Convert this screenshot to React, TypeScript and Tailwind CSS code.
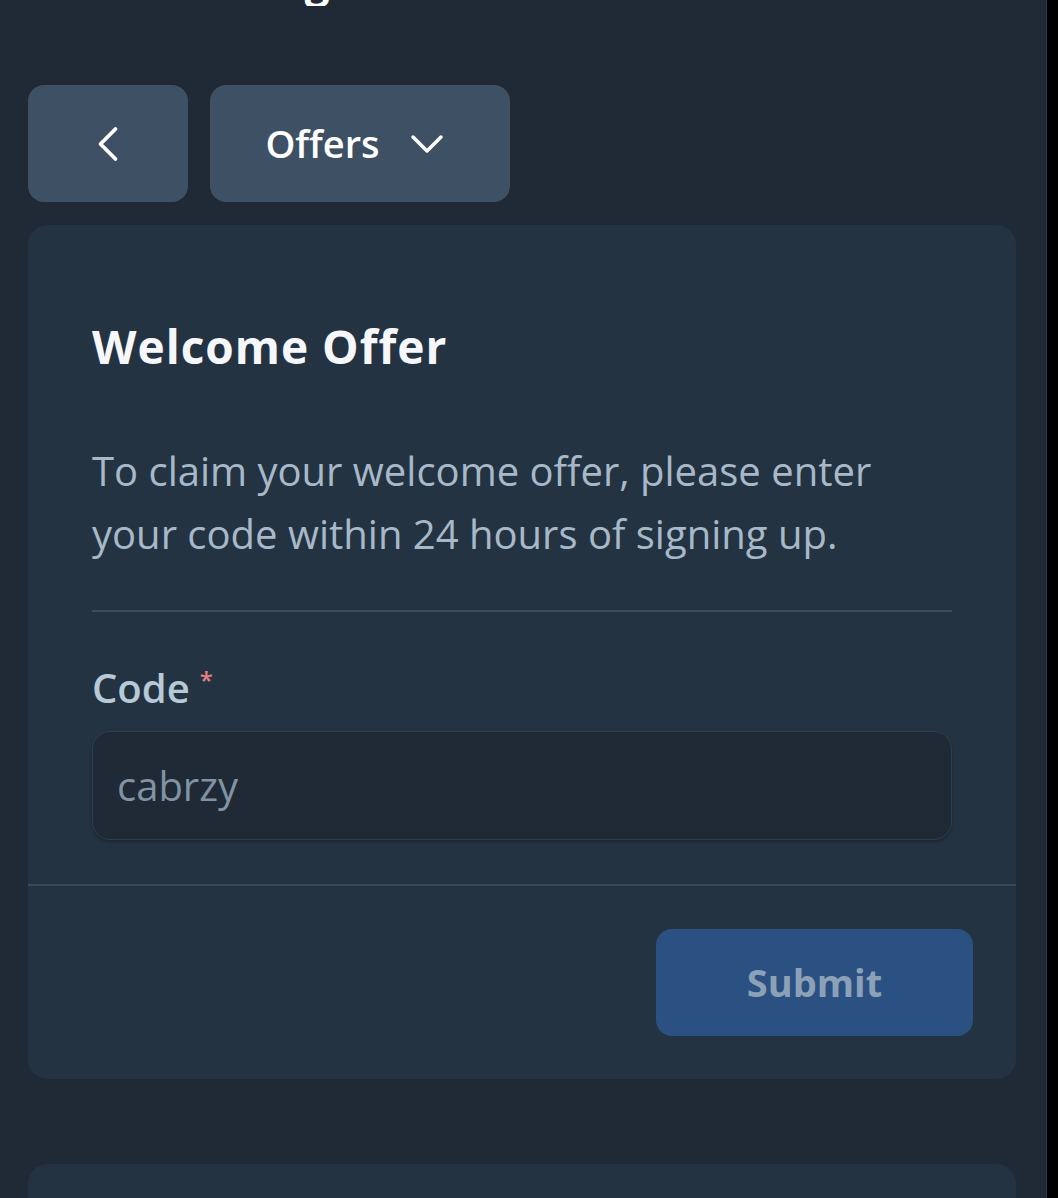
import { ChevronDown, ChevronLeft, Wallet } from "lucide-react";

export default function App() {
  return (
    <div className="flex min-h-screen bg-black font-['Open_Sans',sans-serif]">
      <div className="w-[1047px] shrink-0 border-r border-[#2b3947] bg-[#1f2a36] pl-[28px] pr-[30px] pb-10">
        {/* page title, scrolled mostly out of view */}
        <div className="h-[6px] overflow-hidden">
          <div className="-mt-[42px] flex items-center gap-[10px] pl-[20px]">
            <Wallet className="h-[30px] w-[30px] text-[#8091a2]" strokeWidth={2.5} />
            <h1 className="text-[44px] font-bold leading-none text-white">Bet Settings</h1>
          </div>
        </div>

        {/* nav buttons */}
        <div className="mt-[79px] flex gap-[22px]">
          <button className="flex h-[117px] w-[160px] items-center justify-center rounded-[16px] bg-[#3e5164] text-white">
            <ChevronLeft className="h-[60px] w-[60px]" strokeWidth={1.5} />
          </button>
          <button className="flex h-[117px] w-[300px] items-center justify-center gap-[19px] rounded-[16px] bg-[#3e5164] text-white">
            <span className="text-[38px] font-semibold">Offers</span>
            <ChevronDown className="h-[56px] w-[56px]" strokeWidth={1.5} />
          </button>
        </div>

        {/* welcome offer card */}
        <div className="mt-[23px] rounded-[20px] bg-[#243342]">
          <div className="px-[64px] pt-[95px] pb-[44px]">
            <h2 className="text-[46px] font-bold leading-[52px] tracking-[1px] text-[#f5f7fa]">Welcome Offer</h2>
            <p className="mt-[67px] text-[40px] leading-[63px] text-[#a7b9c9]">
              To claim your welcome offer, please enter your code within 24 hours of signing up.
            </p>
            <div className="mt-[45px] h-[2px] bg-[#3b4d5e]" />
            <label className="mt-[54px] block text-[40px] font-semibold leading-[44px] text-[#b7c9d6]">
              Code
              <span className="relative -top-[14px] ml-[10px] text-[24px] leading-none text-[#e57f80]">*</span>
            </label>
            <input
              className="mt-[21px] h-[109px] w-full rounded-[18px] border border-[#303f4e] bg-[#1f2a36] px-[24px] text-[40px] text-white shadow-[0_2px_3px_rgba(0,0,0,0.25)] outline-none placeholder:text-[#8193a3]"
              placeholder="cabrzy"
            />
          </div>
          <div className="h-[2px] bg-[#37495a]" />
          <div className="flex justify-end p-[43px]">
            <button className="h-[107px] w-[317px] rounded-[16px] bg-[#2b5183] text-[38px] font-bold text-[#8ca1b7]">
              Submit
            </button>
          </div>
        </div>

        {/* next card */}
        <div className="mt-[85px] h-[200px] rounded-[20px] bg-[#243342]" />
      </div>
      <div className="flex-1 bg-black" />
    </div>
  );
}
